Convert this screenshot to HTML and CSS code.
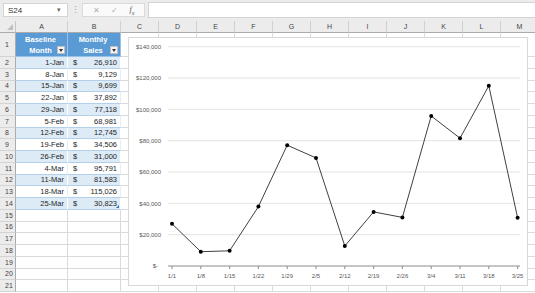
FILE: index.html
```html
<!DOCTYPE html>
<html lang="en">
<head>
    <meta charset="UTF-8">
    <meta name="viewport" content="width=device-width, initial-scale=1.0">
    <title>Sales Chart</title>
    <link rel="stylesheet" href="styles.css">
</head>
<body>
    <div class="formula-bar">
        <div class="name-box">S24<span class="caret">&#9662;</span></div>
        <div class="bar-dots">&#8942;</div>
        <div class="bar-buttons">
            <span class="btn-cancel">&#10005;</span>
            <span class="btn-enter">&#10003;</span>
            <span class="btn-fx">f<sub>x</sub></span>
        </div>
        <div class="formula-input"></div>
    </div>

    <div class="sheet-wrap">
        <div class="sheet" id="sheet"></div>
        <div class="chart">
            <svg id="chart" width="400" height="249" viewBox="0 0 400 249"></svg>
        </div>
    </div>

    <script>
        const rows = [
            ['1-Jan', '1/1', 26910],
            ['8-Jan', '1/8', 9129],
            ['15-Jan', '1/15', 9699],
            ['22-Jan', '1/22', 37892],
            ['29-Jan', '1/29', 77118],
            ['5-Feb', '2/5', 68981],
            ['12-Feb', '2/12', 12745],
            ['19-Feb', '2/19', 34506],
            ['26-Feb', '2/26', 31000],
            ['4-Mar', '3/4', 95791],
            ['11-Mar', '3/11', 81583],
            ['18-Mar', '3/18', 115026],
            ['25-Mar', '3/25', 30823]
        ];
        const cols = ['A', 'B', 'C', 'D', 'E', 'F', 'G', 'H', 'I', 'J', 'K', 'L', 'M'];
        const fmt = n => n.toLocaleString('en-US');

        // sheet cells
        const sheet = document.getElementById('sheet');
        function addCell(cls, html) {
            const d = document.createElement('div');
            d.className = 'cell ' + cls;
            if (html !== undefined) d.innerHTML = html;
            sheet.appendChild(d);
        }

        addCell('corner', '<span class="corner-mark"></span>');
        cols.forEach(c => addCell('col-head', c));

        for (let r = 1; r <= 21; r++) {
            addCell('row-head', r);
            cols.forEach((c, i) => {
                if (r === 1 && i < 2) {
                    const label = i === 0 ? 'Baseline<br>Month' : 'Monthly<br>Sales';
                    addCell('th', '<span>' + label + '</span><span class="filter"></span>');
                } else if (r >= 2 && r <= 14 && i < 2) {
                    const row = rows[r - 2];
                    const band = r % 2 === 0 ? ' band' : '';
                    if (i === 0) {
                        addCell('td date' + band, row[0]);
                    } else {
                        const handle = r === 14 ? '<span class="handle"></span>' : '';
                        addCell('td money' + band, '<span>$</span><span>' + fmt(row[2]) + '</span>' + handle);
                    }
                } else {
                    addCell('empty');
                }
            });
        }

        // chart
        const x0 = 44, dx = 28.8, yBase = 229, yTop = 9.7;
        const yOf = v => yBase - v / 140000 * (yBase - yTop);
        let svg = '';
        for (let k = 0; k <= 7; k++) {
            const v = k * 20000;
            const y = yOf(v);
            if (k > 0) svg += `<line class="grid-line" x1="40" x2="392" y1="${y}" y2="${y}"/>`;
            const label = k ? '$' + fmt(v) : '$-';
            svg += `<text class="y-label" x="${k ? 33 : 30}" y="${y + 2.2}">${label}</text>`;
        }
        svg += `<line class="axis" x1="40" x2="392" y1="${yBase}" y2="${yBase}"/>`;
        const pts = [];
        rows.forEach((row, i) => {
            const x = x0 + i * dx;
            svg += `<line class="axis" x1="${x}" x2="${x}" y1="${yBase}" y2="${yBase + 3}"/>`;
            svg += `<text class="x-label" x="${x}" y="${yBase + 12}">${row[1]}</text>`;
            pts.push(x + ',' + yOf(row[2]).toFixed(1));
        });
        svg += `<polyline class="series" points="${pts.join(' ')}"/>`;
        pts.forEach(p => {
            const [x, y] = p.split(',');
            svg += `<circle class="marker" cx="${x}" cy="${y}" r="2"/>`;
        });
        document.getElementById('chart').innerHTML = svg;
    </script>
</body>
</html>
```

FILE: styles.css
```css
body {
    margin: 0;
    padding: 0;
    overflow: hidden;
    background: #fff;
    font-family: "Liberation Sans", Arial, sans-serif;
    color: #262626;
}

/* formula bar */
.formula-bar {
    display: flex;
    align-items: center;
    height: 21px;
    padding: 3px 0 4px 3px;
    box-sizing: border-box;
    background: #ececec;
}

.name-box {
    display: flex;
    align-items: center;
    justify-content: space-between;
    width: 65px;
    height: 14px;
    padding: 0 6px 0 4px;
    box-sizing: border-box;
    background: #fff;
    border: 1px solid #d4d4d4;
    font-size: 8px;
    color: #333;
}

.caret {
    font-size: 7px;
    color: #666;
}

.bar-dots {
    width: 14px;
    text-align: center;
    font-size: 9px;
    color: #a0a0a0;
}

.bar-buttons {
    display: flex;
    align-items: center;
    justify-content: space-around;
    width: 63px;
    height: 14px;
    padding: 0 4px;
    box-sizing: border-box;
    background: #fafafa;
    border: 1px solid #dadada;
    font-size: 8px;
    color: #b0b0b0;
}

.btn-fx {
    font-family: "Liberation Serif", serif;
    font-style: italic;
    color: #555;
}

.btn-fx sub {
    font-size: 6px;
}

.formula-input {
    flex: 1;
    height: 14px;
    margin-left: 3px;
    background: #fff;
    border: 1px solid #d4d4d4;
    border-right: none;
}

/* sheet */
.sheet-wrap {
    position: relative;
}

.sheet {
    display: grid;
    grid-template-columns: 16px 52px 53px repeat(11, 38px);
    grid-template-rows: 12px 24px repeat(20, 11.75px);
    font-size: 7.5px;
}

.cell {
    box-sizing: border-box;
    border-right: 1px solid #dadada;
    border-bottom: 1px solid #dadada;
    display: flex;
    align-items: center;
    overflow: hidden;
    position: relative;
}

.corner {
    background: #ececec;
    border-right-color: #c6c6c6;
    border-bottom-color: #ababab;
}

.corner-mark {
    position: absolute;
    right: 2px;
    bottom: 2px;
    width: 0;
    height: 0;
    border-left: 6px solid transparent;
    border-bottom: 6px solid #c0c0c0;
}

.col-head {
    justify-content: center;
    background: #ececec;
    color: #444;
    font-size: 7px;
    border-right-color: #d0d0d0;
    border-bottom-color: #ababab;
}

.row-head {
    padding-left: 5px;
    background: #ececec;
    color: #444;
    font-size: 7px;
    border-right-color: #ababab;
    border-bottom-color: #d4d4d4;
}

.th {
    justify-content: center;
    align-items: center;
    padding-right: 2px;
    background: #5b9bd5;
    border-right-color: #9bc2e6;
    border-bottom-color: #9bc2e6;
    color: #fff;
    font-weight: bold;
    text-align: center;
    line-height: 11px;
}

.filter {
    position: absolute;
    right: 2px;
    bottom: 2px;
    width: 8px;
    height: 8px;
    box-sizing: border-box;
    background: #f3f3f3;
    border: 1px solid #bfbfbf;
}

.filter::after {
    content: '';
    position: absolute;
    left: 1px;
    top: 2px;
    border-left: 2.5px solid transparent;
    border-right: 2.5px solid transparent;
    border-top: 3px solid #333;
}

.td {
    border-right-color: #e8eef6;
    border-bottom-color: #b4cfea;
}

.band {
    background: #ddebf7;
    border-right-color: #fff;
}

.date {
    justify-content: flex-end;
    padding-right: 3px;
}

.money {
    justify-content: space-between;
    padding: 0 3px 0 5px;
}

.handle {
    position: absolute;
    right: 1px;
    bottom: 1px;
    border-left: 3px solid transparent;
    border-bottom: 3px solid #2f75b5;
}

.empty {
    background: #fff;
}

/* chart */
.chart {
    position: absolute;
    left: 128px;
    top: 16px;
    width: 400px;
    height: 249px;
    box-sizing: border-box;
    background: #fff;
    border: 1px solid #d9d9d9;
}

.chart svg {
    display: block;
    margin: -1px 0 0 -1px;
    font-family: "Liberation Sans", Arial, sans-serif;
}

.grid-line {
    stroke: #e3e3e3;
    stroke-width: 1;
}

.axis {
    stroke: #8c8c8c;
    stroke-width: 1;
}

.y-label {
    font-size: 6px;
    fill: #595959;
    text-anchor: end;
}

.x-label {
    font-size: 6px;
    fill: #595959;
    text-anchor: middle;
}

.series {
    fill: none;
    stroke: #404040;
    stroke-width: 1;
}

.marker {
    fill: #000;
}
```
